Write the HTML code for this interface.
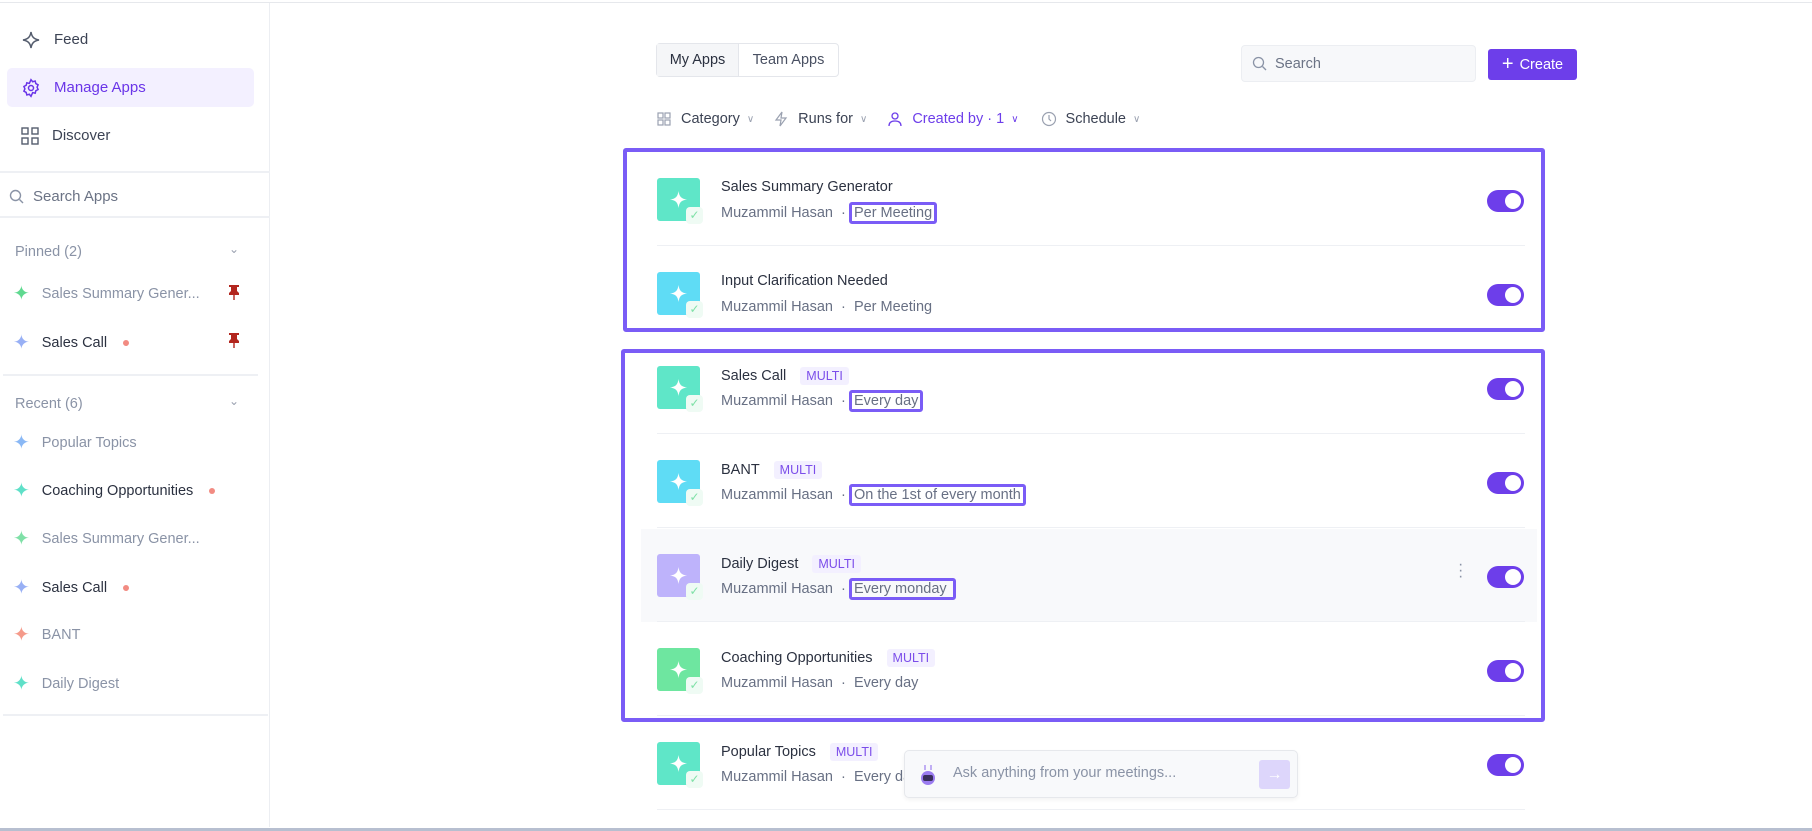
<!DOCTYPE html>
<html><head><meta charset="utf-8"><style>
*{box-sizing:border-box;margin:0;padding:0}
body{width:1812px;height:831px;overflow:hidden;background:#fff;font-family:"Liberation Sans",sans-serif;position:relative;color:#2b3140}
.a{position:absolute}
.side{left:0;top:3px;width:270px;height:824px;border-right:1px solid #eceef2}
.nav{left:7px;width:247px;height:39px;display:flex;align-items:center;padding-left:14px;font-size:15px;color:#3c4354;gap:13px;border-radius:5px}
.hr{height:2px;background:#eef0f4}
.sec{left:15px;font-size:14.5px;color:#8a93a6}
.it{left:13px;font-size:14.5px;display:flex;align-items:center;gap:12px}
.dot{width:6px;height:6px;border-radius:50%;background:#f28b82;display:inline-block;margin-left:4px}
.row{left:657px;width:868px;height:94px}
.ic{position:absolute;left:0;top:26px;width:43px;height:43px;border-radius:3px}
.ic svg{position:absolute;left:12px;top:12px}
.ck{position:absolute;left:29px;top:29px;width:17px;height:17px;background:#effbf4;border-radius:4px;color:#7fe0a7;font-size:12px;text-align:center;line-height:17px}
.t{position:absolute;left:64px;top:27px;font-size:14.5px;color:#2b3140;display:flex;align-items:center;gap:14px}
.s{position:absolute;left:64px;top:53px;font-size:14.5px;color:#687084;white-space:nowrap}
.m{font-size:12.5px;color:#7b4dea;background:#f3f0ff;padding:2px 6px;border-radius:3px}
.tg{position:absolute;left:830px;top:38px;width:37px;height:22px;border-radius:11px;background:#6d3eea}
.tg:after{content:"";position:absolute;right:3px;top:3px;width:16px;height:16px;border-radius:50%;background:#fff}
.sep{position:absolute;left:0;right:0;bottom:0;height:1px;background:#eef0f4}
.hl{border:3px solid #7a5cf6;border-radius:3px;padding:0 2px;margin-left:-5px}
.box{border:4px solid #7a5cf6;border-radius:3px}
.st{font-size:20px}
</style></head><body>
<div class="a" style="left:0;top:2px;width:1812px;height:1px;background:#e6e8ec"></div>
<div class="a side">
 <div class="a nav" style="top:17px"><svg width="20" height="20" viewBox="0 0 20 20"><path d="M10 2 C10.8 7 13 9.2 18 10 C13 10.8 10.8 13 10 18 C9.2 13 7 10.8 2 10 C7 9.2 9.2 7 10 2Z" fill="none" stroke="#555d6e" stroke-width="1.5"/></svg>Feed</div>
 <div class="a nav" style="top:65px;background:#f3f0ff;color:#6a35e8"><svg width="20" height="20" viewBox="0 0 24 24" fill="none" stroke="#6a35e8" stroke-width="1.8"><circle cx="12" cy="12" r="3"/><path d="M12 2l2 2.5 3-.8.8 3 2.7 1.5-1.2 2.8 1.2 2.8-2.7 1.5-.8 3-3-.8L12 22l-2-2.5-3 .8-.8-3-2.7-1.5L4.7 13 3.5 10.2 6.2 8.7l.8-3 3 .8z"/></svg>Manage Apps</div>
 <div class="a nav" style="top:113px"><svg width="18" height="18" viewBox="0 0 18 18" fill="none" stroke="#555d6e" stroke-width="1.4"><rect x="1" y="1" width="6" height="6"/><rect x="11" y="1" width="6" height="6"/><rect x="1" y="11" width="6" height="6"/><rect x="11" y="11" width="6" height="6"/></svg>Discover</div>
 <div class="a hr" style="top:168px;left:0;width:270px"></div>
 <div class="a" style="top:185px;left:9px;font-size:15px;color:#6b7385;display:flex;gap:9px;align-items:center"><svg width="15" height="15" viewBox="0 0 15 15" fill="none" stroke="#8a93a6" stroke-width="1.4"><circle cx="6.5" cy="6.5" r="5"/><path d="M10.5 10.5l3.5 3.5"/></svg>Search Apps</div>
 <div class="a hr" style="top:213px;left:0;width:270px"></div>
 <div class="a sec" style="top:241px">Pinned (2)</div>
 <div class="a" style="top:239px;left:229px;color:#9aa1b0;font-size:12px">&#8964;</div>
 <div class="a it" style="top:278px;color:#8a93a6"><span class="st" style="color:#5fd990">✦</span>Sales Summary Gener...</div>
 <svg class="a" style="top:281px;left:228px" width="12" height="16" viewBox="0 0 12 16"><path d="M1 1h10v2H9v4l2 2v2H1V9l2-2V3H1z" fill="#b3261e"/><rect x="5.3" y="11" width="1.4" height="5" fill="#b3261e"/></svg>
 <div class="a it" style="top:327px;color:#2b3140"><span class="st" style="color:#98b0f5">✦</span>Sales Call<span class="dot"></span></div>
 <svg class="a" style="top:329px;left:228px" width="12" height="16" viewBox="0 0 12 16"><path d="M1 1h10v2H9v4l2 2v2H1V9l2-2V3H1z" fill="#b3261e"/><rect x="5.3" y="11" width="1.4" height="5" fill="#b3261e"/></svg>
 <div class="a hr" style="top:371px;left:3px;width:255px"></div>
 <div class="a sec" style="top:393px">Recent (6)</div>
 <div class="a" style="top:391px;left:229px;color:#9aa1b0;font-size:12px">&#8964;</div>
 <div class="a it" style="top:427px;color:#8a93a6"><span class="st" style="color:#8ab8f5">✦</span>Popular Topics</div>
 <div class="a it" style="top:475px;color:#2b3140"><span class="st" style="color:#5fe0c8">✦</span>Coaching Opportunities<span class="dot"></span></div>
 <div class="a it" style="top:523px;color:#8a93a6"><span class="st" style="color:#7fe0a7">✦</span>Sales Summary Gener...</div>
 <div class="a it" style="top:572px;color:#2b3140"><span class="st" style="color:#98b0f5">✦</span>Sales Call<span class="dot"></span></div>
 <div class="a it" style="top:619px;color:#8a93a6"><span class="st" style="color:#f59a8a">✦</span>BANT</div>
 <div class="a it" style="top:668px;color:#8a93a6"><span class="st" style="color:#5fe0c8">✦</span>Daily Digest</div>
 <div class="a hr" style="top:711px;left:3px;width:265px"></div>
</div>

<div class="a" style="left:656px;top:43px;width:183px;height:34px;border:1px solid #e4e6eb;border-radius:4px;display:flex;font-size:14.5px">
 <div style="width:82px;background:#f5f6f8;border-right:1px solid #e4e6eb;display:flex;align-items:center;justify-content:center">My Apps</div>
 <div style="flex:1;display:flex;align-items:center;justify-content:center;color:#4a5163">Team Apps</div>
</div>
<div class="a" style="left:1241px;top:45px;width:235px;height:37px;background:#f7f8fa;border:1px solid #eceef2;border-radius:4px;display:flex;align-items:center;padding-left:10px;gap:8px;font-size:14.5px;color:#6b7385"><svg width="15" height="15" viewBox="0 0 15 15" fill="none" stroke="#8a93a6" stroke-width="1.3"><circle cx="6.5" cy="6.5" r="5"/><path d="M10.5 10.5l3.5 3.5"/></svg>Search</div>
<div class="a" style="left:1488px;top:49px;width:89px;height:31px;background:#6d3eea;border-radius:3px;color:#fff;font-size:14.5px;display:flex;align-items:center;justify-content:center;gap:6px"><span style="font-size:20px">+</span>Create</div>

<div class="a" style="left:657px;top:111px;font-size:14.5px;color:#3c4354;display:flex;align-items:center;white-space:nowrap">
 <svg width="14" height="14" viewBox="0 0 14 14" fill="none" stroke="#9aa1b0" stroke-width="1.2"><rect x="1" y="1" width="5" height="5"/><rect x="8" y="1" width="5" height="5"/><rect x="1" y="8" width="5" height="5"/><rect x="8" y="8" width="5" height="5"/></svg><span style="margin-left:10px">Category</span><span style="color:#9aa1b0;font-size:10px;margin-left:7px">∨</span>
 <svg style="margin-left:20px" width="14" height="16" viewBox="0 0 14 16" fill="none" stroke="#9aa1b0" stroke-width="1.2"><path d="M8 1L2 9h5l-1 6 6-8H7z"/></svg><span style="margin-left:10px">Runs for</span><span style="color:#9aa1b0;font-size:10px;margin-left:7px">∨</span>
 <svg style="margin-left:21px" width="14" height="16" viewBox="0 0 14 16" fill="none" stroke="#6d3eea" stroke-width="1.3"><circle cx="7" cy="5" r="3"/><path d="M1 15c0-4 3-5 6-5s6 1 6 5"/></svg><span style="margin-left:10px;color:#6d3eea">Created by · 1</span><span style="color:#6d3eea;font-size:10px;margin-left:7px">∨</span>
 <svg style="margin-left:22px" width="16" height="16" viewBox="0 0 16 16" fill="none" stroke="#9aa1b0" stroke-width="1.2"><circle cx="8" cy="8" r="6.5"/><path d="M8 4v4l2 2"/></svg><span style="margin-left:9px">Schedule</span><span style="color:#9aa1b0;font-size:10px;margin-left:7px">∨</span>
</div>

<div class="a box" style="left:623px;top:148px;width:922px;height:184px"></div>
<div class="a box" style="left:621px;top:349px;width:924px;height:373px"></div>
<div class="a" style="left:641px;top:529px;width:896px;height:93px;background:#f8f9fb"></div>

<div class="a row" style="top:152px"><div class="ic" style="background:#5fe6c8"><svg width="19" height="19" viewBox="0 0 20 20"><path d="M10 1C10.8 7 13 9.2 19 10C13 10.8 10.8 13 10 19C9.2 13 7 10.8 1 10C7 9.2 9.2 7 10 1Z" fill="#fff"/></svg><div class="ck">✓</div></div>
<div class="t">Sales Summary Generator</div><div class="s">Muzammil Hasan &nbsp;·&nbsp; <span class="hl">Per Meeting</span></div><div class="tg"></div><div class="sep"></div></div>

<div class="a row" style="top:246px"><div class="ic" style="background:#5fdcf5"><svg width="19" height="19" viewBox="0 0 20 20"><path d="M10 1C10.8 7 13 9.2 19 10C13 10.8 10.8 13 10 19C9.2 13 7 10.8 1 10C7 9.2 9.2 7 10 1Z" fill="#fff"/></svg><div class="ck">✓</div></div>
<div class="t">Input Clarification Needed</div><div class="s">Muzammil Hasan &nbsp;·&nbsp; Per Meeting</div><div class="tg"></div></div>

<div class="a row" style="top:340px"><div class="ic" style="background:#5fe6c8"><svg width="19" height="19" viewBox="0 0 20 20"><path d="M10 1C10.8 7 13 9.2 19 10C13 10.8 10.8 13 10 19C9.2 13 7 10.8 1 10C7 9.2 9.2 7 10 1Z" fill="#fff"/></svg><div class="ck">✓</div></div>
<div class="t">Sales Call<span class="m">MULTI</span></div><div class="s">Muzammil Hasan &nbsp;·&nbsp; <span class="hl">Every day</span></div><div class="tg"></div><div class="sep"></div></div>

<div class="a row" style="top:434px"><div class="ic" style="background:#5fdcf5"><svg width="19" height="19" viewBox="0 0 20 20"><path d="M10 1C10.8 7 13 9.2 19 10C13 10.8 10.8 13 10 19C9.2 13 7 10.8 1 10C7 9.2 9.2 7 10 1Z" fill="#fff"/></svg><div class="ck">✓</div></div>
<div class="t">BANT<span class="m">MULTI</span></div><div class="s">Muzammil Hasan &nbsp;·&nbsp; <span class="hl">On the 1st of every month</span></div><div class="tg"></div><div class="sep"></div></div>

<div class="a row" style="top:528px"><div class="ic" style="background:#beb3fb"><svg width="19" height="19" viewBox="0 0 20 20"><path d="M10 1C10.8 7 13 9.2 19 10C13 10.8 10.8 13 10 19C9.2 13 7 10.8 1 10C7 9.2 9.2 7 10 1Z" fill="#fff"/></svg><div class="ck">✓</div></div>
<div class="t">Daily Digest<span class="m">MULTI</span></div><div class="s">Muzammil Hasan &nbsp;·&nbsp; <span class="hl">Every monday&nbsp;</span></div><div style="position:absolute;left:801px;top:34px;color:#8a93a6;font-size:16px;line-height:6px">·<br>·<br>·</div><div class="tg"></div><div class="sep"></div></div>

<div class="a row" style="top:622px"><div class="ic" style="background:#6ee6a0"><svg width="19" height="19" viewBox="0 0 20 20"><path d="M10 1C10.8 7 13 9.2 19 10C13 10.8 10.8 13 10 19C9.2 13 7 10.8 1 10C7 9.2 9.2 7 10 1Z" fill="#fff"/></svg><div class="ck">✓</div></div>
<div class="t">Coaching Opportunities<span class="m">MULTI</span></div><div class="s">Muzammil Hasan &nbsp;·&nbsp; Every day</div><div class="tg"></div><div class="sep"></div></div>

<div class="a row" style="top:716px"><div class="ic" style="background:#5fe6c8"><svg width="19" height="19" viewBox="0 0 20 20"><path d="M10 1C10.8 7 13 9.2 19 10C13 10.8 10.8 13 10 19C9.2 13 7 10.8 1 10C7 9.2 9.2 7 10 1Z" fill="#fff"/></svg><div class="ck">✓</div></div>
<div class="t">Popular Topics<span class="m">MULTI</span></div><div class="s">Muzammil Hasan &nbsp;·&nbsp; Every day</div><div class="tg"></div><div class="sep"></div></div>

<div class="a" style="left:904px;top:750px;width:394px;height:48px;background:#f8f9fb;border:1px solid #e6e8ec;border-radius:5px;box-shadow:0 2px 4px rgba(0,0,0,.05)">
 <svg class="a" style="left:14px;top:13px" width="18" height="22" viewBox="0 0 18 22"><path d="M6 1v5M12 1v5" stroke="#9b7cf0" stroke-width="1.2"/><ellipse cx="9" cy="14" rx="7" ry="7" fill="#9b7cf0"/><rect x="4" y="11" width="10" height="6" rx="2" fill="#3a2f5c"/></svg>
 <div class="a" style="left:48px;top:14px;font-size:14.5px;color:#8a93a6">Ask anything from your meetings...</div>
 <div class="a" style="left:354px;top:9px;width:31px;height:29px;background:#ddd6fb;border-radius:3px;color:#fff;text-align:center;line-height:29px;font-size:16px">→</div>
</div>
<div class="a" style="left:0;top:828px;width:1812px;height:3px;background:#b7bfd0"></div>
</body></html>
